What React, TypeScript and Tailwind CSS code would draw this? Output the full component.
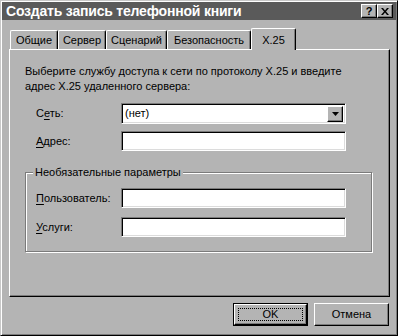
import React from "react"

const face = "bg-[#b4b4b4]"

function Raised({ className = "", children }: { className?: string; children?: React.ReactNode }) {
  return (
    <div
      className={`border border-t-white border-l-white border-r-black border-b-black shadow-[inset_-1px_-1px_#7b7b7b] ${face} ${className}`}
    >
      {children}
    </div>
  )
}

function Field({ children, combo }: { children?: React.ReactNode; combo?: boolean }) {
  return (
    <div
      className={`w-[225px] ${combo ? "h-[21px]" : "h-[20px]"} flex items-center border border-t-[#7b7b7b] border-l-[#7b7b7b] border-r-white border-b-white shadow-[inset_1px_1px_#000,inset_-1px_-1px_#dcdcdc] bg-white pl-[3px] pr-[2px]`}
    >
      <span className="flex-1 text-[11px] text-black">{children}</span>
      {combo && (
        <Raised className="w-[16px] h-[16px] flex items-center justify-center">
          <svg width="7" height="4" viewBox="0 0 7 4">
            <path d="M0 0h7L3.5 4z" fill="#000" />
          </svg>
        </Raised>
      )}
    </div>
  )
}

function Row({ label, u, rest, combo, value }: { label?: string; u: string; rest: string; combo?: boolean; value?: string }) {
  return (
    <div className="flex items-center">
      <span className="w-[85px] text-[11px] text-black">
        {label}
        <span className="underline underline-offset-2">{u}</span>
        {rest}
      </span>
      <Field combo={combo}>{value}</Field>
    </div>
  )
}

const tabs = [
  { name: "Общие", w: "w-[48px]" },
  { name: "Сервер", w: "w-[48px]" },
  { name: "Сценарий", w: "w-[61px]" },
  { name: "Безопасность", w: "w-[84px]" },
]

export default function App() {
  return (
    <div
      className={`w-[398px] h-[336px] ${face} border border-t-[#c8c8c8] border-l-[#c8c8c8] border-r-black border-b-black shadow-[inset_1px_1px_#fff,inset_-1px_-1px_#7b7b7b] p-[1px] flex flex-col`}
      style={{ fontFamily: '"Liberation Sans", Arial, sans-serif' }}
    >
      {/* title bar */}
      <div className="h-[18px] bg-[#5a5a5a] flex items-center pl-[4px] pr-[3px]">
        <span className="flex-1 text-white font-bold text-[14px] leading-none tracking-[-0.2px]">
          Создать запись телефонной книги
        </span>
        <Raised className="w-[16px] h-[14px] flex items-center justify-center text-[11px] font-bold leading-none text-black">
          ?
        </Raised>
        <Raised className="w-[16px] h-[14px] flex items-center justify-center">
          <svg width="8" height="7" viewBox="0 0 8 7">
            <path d="M0 0h2l2 2.5L6 0h2L5 3.5 8 7H6L4 4.5 2 7H0l3-3.5z" fill="#000" />
          </svg>
        </Raised>
      </div>

      <div className="ml-[7px] w-[381px] mt-[8px] flex flex-col">
        {/* tabs */}
        <div className="h-[21px] flex items-end pl-[1px]">
          {tabs.map((t) => (
            <div
              key={t.name}
              className={`${t.w} h-[19px] flex items-center justify-center border-l border-t border-l-white border-t-white border-r border-r-black shadow-[inset_-1px_0_#7b7b7b] rounded-t-[2px] text-[11px] text-black`}
            >
              {t.name}
            </div>
          ))}
          <div
            className={`relative z-10 w-[45px] h-[22px] -mb-[1px] ${face} flex items-start pt-[3px] justify-center border-l border-t border-l-white border-t-white border-r border-r-black shadow-[inset_-1px_0_#7b7b7b] rounded-t-[2px] text-[11px] text-black`}
          >
            X.25
          </div>
        </div>

        {/* panel */}
        <Raised className="h-[248px] pl-[15px] pt-[14px] flex flex-col">
          <p className="text-[11px] leading-[15px] text-black">
            Выберите службу доступа к сети по протоколу X.25 и введите
            <br />
            адрес X.25 удаленного сервера:
          </p>
          <div className="pl-[11px] mt-[9px] flex flex-col gap-[7px]">
            <Row label="С" u="е" rest="ть:" combo value="(нет)" />
            <Row u="А" rest="дрес:" />
          </div>
          <div className="mt-[21px] w-[347px] h-[80px] border border-[#7b7b7b] shadow-[inset_1px_1px_#fff,1px_1px_#fff] pl-[10px] flex flex-col">
            <span className={`-mt-[8px] ml-[-3px] w-fit px-[2px] ${face} text-[11px] leading-[15px] text-black`}>
              Необязательные параметры
            </span>
            <div className="mt-[8px] flex flex-col gap-[9px]">
              <Row u="П" rest="ользователь:" />
              <Row u="У" rest="слуги:" />
            </div>
          </div>
        </Raised>
      </div>

      {/* buttons */}
      <div className="mt-[6px] flex justify-end gap-[6px] pr-[7px]">
        <div className="w-[75px] h-[23px] border border-black">
          <Raised className="w-full h-full p-[3px]">
            <div className="w-full h-full border border-dotted border-black flex items-center justify-center text-[11px] text-black">
              OK
            </div>
          </Raised>
        </div>
        <Raised className="w-[75px] h-[23px] flex items-center justify-center text-[11px] text-black">
          Отмена
        </Raised>
      </div>
    </div>
  )
}
